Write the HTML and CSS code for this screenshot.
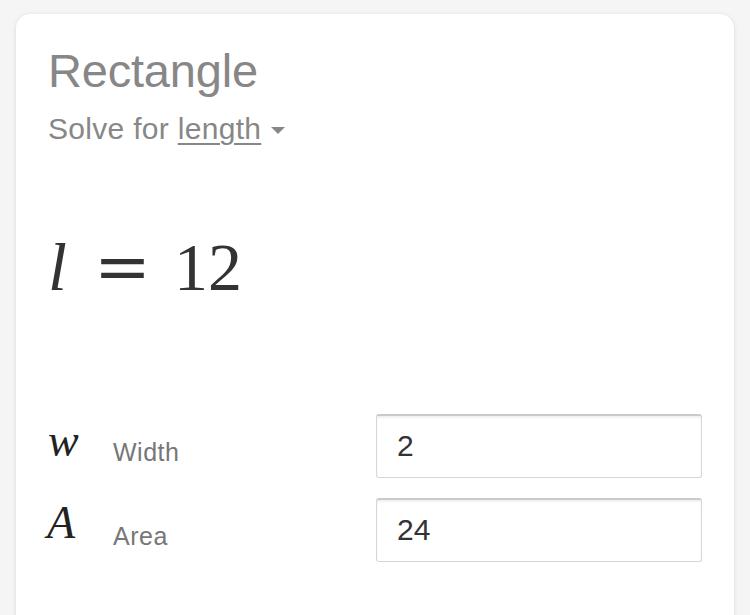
FILE: index.html
```html
<!DOCTYPE html>
<html>
<head>
<meta charset="utf-8">
<link rel="stylesheet" href="styles.css">
</head>
<body>
<div class="card">
  <div class="title">Rectangle</div>
  <div class="solve">Solve for <span class="var">length</span><span class="caret"></span></div>
  <div class="result"><span class="mi">l</span><span class="eq">=</span><span class="num">12</span></div>
  <div class="fields">
    <div class="row">
      <span class="sym">w</span>
      <span class="label">Width</span>
      <div class="input">2</div>
    </div>
    <div class="row">
      <span class="sym sym-a">A</span>
      <span class="label">Area</span>
      <div class="input">24</div>
    </div>
  </div>
</div>
</body>
</html>
```
FILE: styles.css
```css
html, body {
  margin: 0;
  padding: 0;
  background: #f5f5f5;
  height: 100%;
  overflow: hidden;
}
body {
  padding: 14px 16px 0 16px;
  box-sizing: border-box;
  font-family: "Liberation Sans", Arial, sans-serif;
}
.card {
  background: #fff;
  border-radius: 14px;
  box-shadow: 0 1px 5px rgba(0,0,0,0.10), 0 0 1px rgba(0,0,0,0.08);
  height: 640px;
  padding: 0 32px;
  box-sizing: border-box;
}
.title {
  font-size: 47px;
  color: #878787;
  line-height: 1;
  padding-top: 33px;
  letter-spacing: -0.2px;
}
.solve {
  font-size: 30px;
  color: #878787;
  line-height: 1;
  margin-top: 20px;
  display: flex;
  align-items: center;
  letter-spacing: 0.3px;
  white-space: pre;
}
.var {
  text-decoration: underline;
  text-decoration-thickness: 2px;
  text-underline-offset: 4px;
}
.caret {
  width: 0;
  height: 0;
  border-left: 7px solid transparent;
  border-right: 7px solid transparent;
  border-top: 7px solid #878787;
  margin-left: 10px;
  margin-top: 2px;
}
.result {
  margin-top: 89px;
  font-family: "Liberation Serif", "Times New Roman", serif;
  font-size: 68px;
  line-height: 1;
  color: #333;
  display: flex;
  align-items: baseline;
}
.mi {
  font-style: italic;
}
.eq {
  font-family: "DejaVu Serif", serif;
  margin-left: 27px;
  margin-right: 23px;
}
.fields {
  margin-top: 113px;
  display: flex;
  flex-direction: column;
  gap: 21px;
}
.row {
  display: flex;
  align-items: center;
  height: 63px;
}
.sym {
  font-family: "Liberation Serif", "Times New Roman", serif;
  font-style: italic;
  font-size: 46px;
  color: #222;
  width: 65px;
  margin-top: -10px;
}
.sym-a {
  margin-top: -14px;
  margin-left: -1px;
  width: 66px;
}
.label {
  font-size: 25px;
  color: #777;
  width: 263px;
  margin-top: 14px;
  letter-spacing: 0.5px;
}
.input {
  flex: 0 0 auto;
  width: 326px;
  height: 64px;
  box-sizing: border-box;
  border: 1px solid #d6d6d6;
  border-top: 2px solid #cacaca;
  border-radius: 3px;
  box-shadow: inset 0 2px 2px rgba(0,0,0,0.06);
  font-size: 30px;
  color: #333;
  padding-left: 20px;
  display: flex;
  align-items: center;
}
```
